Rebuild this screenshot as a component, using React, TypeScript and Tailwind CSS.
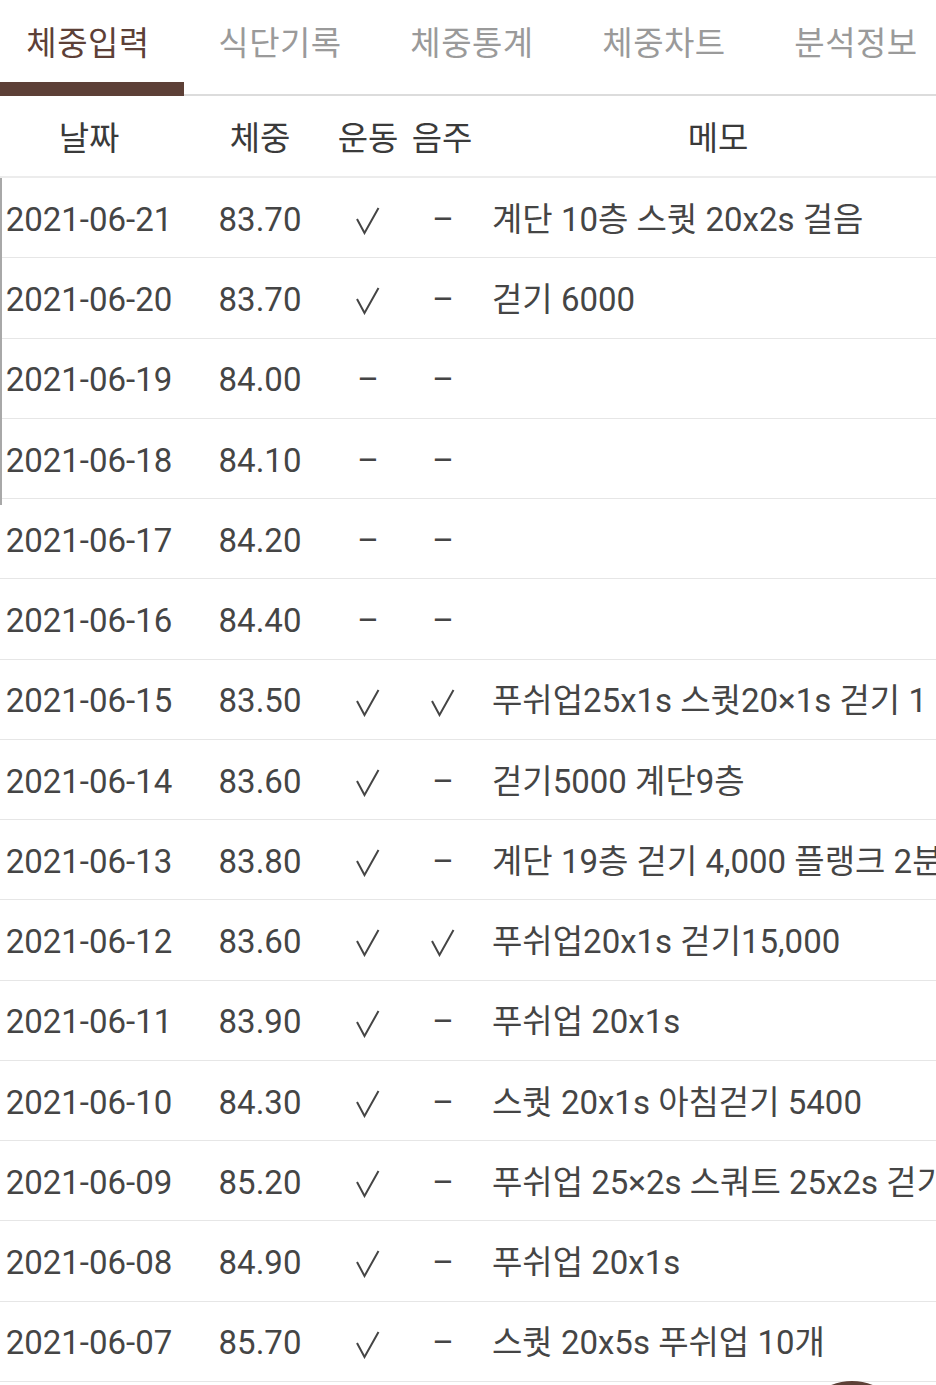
const tabs = ["체중입력", "식단기록", "체중통계", "체중차트", "분석정보"];

const rows = [
  { date: "2021-06-21", weight: "83.70", ex: true, drink: false, memo: "계단 10층 스퀏 20x2s 걸음" },
  { date: "2021-06-20", weight: "83.70", ex: true, drink: false, memo: "걷기 6000" },
  { date: "2021-06-19", weight: "84.00", ex: false, drink: false, memo: "" },
  { date: "2021-06-18", weight: "84.10", ex: false, drink: false, memo: "" },
  { date: "2021-06-17", weight: "84.20", ex: false, drink: false, memo: "" },
  { date: "2021-06-16", weight: "84.40", ex: false, drink: false, memo: "" },
  { date: "2021-06-15", weight: "83.50", ex: true, drink: true, memo: "푸쉬업25x1s 스퀏20×1s 걷기 1" },
  { date: "2021-06-14", weight: "83.60", ex: true, drink: false, memo: "걷기5000 계단9층" },
  { date: "2021-06-13", weight: "83.80", ex: true, drink: false, memo: "계단 19층 걷기 4,000 플랭크 2분" },
  { date: "2021-06-12", weight: "83.60", ex: true, drink: true, memo: "푸쉬업20x1s 걷기15,000" },
  { date: "2021-06-11", weight: "83.90", ex: true, drink: false, memo: "푸쉬업 20x1s" },
  { date: "2021-06-10", weight: "84.30", ex: true, drink: false, memo: "스퀏 20x1s 아침걷기 5400" },
  { date: "2021-06-09", weight: "85.20", ex: true, drink: false, memo: "푸쉬업 25×2s 스쿼트 25x2s 걷기" },
  { date: "2021-06-08", weight: "84.90", ex: true, drink: false, memo: "푸쉬업 20x1s" },
  { date: "2021-06-07", weight: "85.70", ex: true, drink: false, memo: "스퀏 20x5s 푸쉬업 10개" },
];

const cols = "grid grid-cols-[178px_164px_52px_98px_452px]";

function Mark({ on }: { on: boolean }) {
  return on ? (
    <svg width="24" height="28" viewBox="0 0 24 28" className="mt-[3px]">
      <polyline points="1,12 8.5,26 22.5,1" fill="none" stroke="#454545" strokeWidth="2" strokeLinejoin="miter" />
    </svg>
  ) : (
    <span>–</span>
  );
}

export default function App() {
  return (
    <div className="relative h-[1385px] w-[936px] overflow-hidden bg-white font-['Roboto','Noto_Sans_CJK_KR',sans-serif] text-[#454545]">
      {/* tab bar */}
      <div className="relative h-[96px] border-b-2 border-[#dcdcdc]">
        <div className="flex -ml-2 h-full">
          {tabs.map((t, i) => (
            <div
              key={t}
              className={
                "relative flex w-[192px] shrink-0 justify-center pt-[19px] text-[33px] tracking-[0.5px] " +
                (i === 0 ? "text-[#5d4037]" : "text-[#9a9a9a]")
              }
            >
              {t}
              {i === 0 && <div className="absolute bottom-[-2px] left-0 h-[14px] w-[192px] bg-[#5d4037]" />}
            </div>
          ))}
        </div>
      </div>

      {/* header */}
      <div className={cols + " h-[82px] items-center border-b-2 border-[#ececec] pt-[5px] text-[33px] text-[#3a3a3a]"}>
        <div className="flex justify-center">날짜</div>
        <div className="flex justify-center">체중</div>
        <div className="flex justify-center whitespace-nowrap">운동</div>
        <div className="flex justify-center whitespace-nowrap pr-[2px]">음주</div>
        <div className="flex justify-center">메모</div>
      </div>

      {/* rows */}
      <div className="relative">
        <div className="absolute left-0 top-0 h-[327px] w-[2px] bg-[#a8a8a8]" />
        {rows.map((r) => (
          <div
            key={r.date}
            className={cols + " h-[80.25px] items-center border-b border-[#e6e6e6] pt-[4px] text-[33px] whitespace-nowrap"}
          >
            <div className="flex justify-center">{r.date}</div>
            <div className="flex justify-center">{r.weight}</div>
            <div className="flex justify-center">
              <Mark on={r.ex} />
            </div>
            <div className="flex justify-center">
              <Mark on={r.drink} />
            </div>
            <div className="overflow-visible">{r.memo}</div>
          </div>
        ))}
      </div>

      <div className="absolute left-[796px] top-[1381px] h-[112px] w-[112px] rounded-full bg-[#5d4037]" />
    </div>
  );
}
